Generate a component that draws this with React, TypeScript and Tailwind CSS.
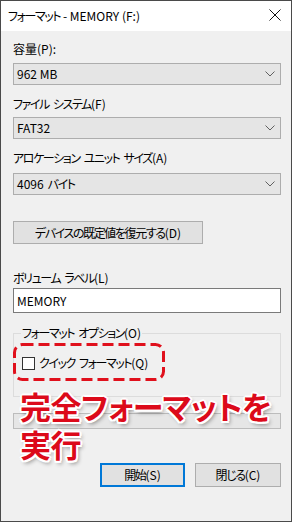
import React from "react";

const font = "font-['Yu_Gothic_UI','Noto_Sans_CJK_JP',sans-serif] [font-feature-settings:'palt']";

function Chevron() {
  return (
    <svg width="10" height="6" viewBox="0 0 10 6" className="block">
      <path d="M0.5 0.5 L5 5 L9.5 0.5" fill="none" stroke="#606060" strokeWidth="1" />
    </svg>
  );
}

function K({ children }: { children: React.ReactNode }) {
  return <span className="tracking-[-1.4px]">{children}</span>;
}

function Sp() {
  return <span className="inline-block w-[4px]" />;
}

function Select({ value }: { value: React.ReactNode }) {
  return (
    <div className="flex h-[22px] w-[268px] items-center justify-between border border-[#adadad] bg-[#e5e5e5] pl-[3px] pr-[5px]">
      <span className="whitespace-nowrap text-[12px] leading-[16px] text-black">{value}</span>
      <Chevron />
    </div>
  );
}

function Label({ children, className = "" }: { children: React.ReactNode; className?: string }) {
  return <div className={`h-[16px] whitespace-nowrap text-[12px] leading-[16px] text-black ${className}`}>{children}</div>;
}

export default function App() {
  return (
    <div className={`h-[523px] w-[294px] bg-white ${font}`}>
      <div className="relative flex h-[522px] w-[292px] flex-col border border-[#4a4a4a] bg-[#f0f0f0]">
        {/* title bar */}
        <div className="flex h-[30px] items-center justify-between bg-white pl-[7px] pr-[8px]">
          <span className="text-[12px] leading-[16px] text-black">
            <K>フォーマット</K> - MEMORY (F:)
          </span>
          <svg width="12" height="12" viewBox="0 0 12 12" className="mr-[2px] mt-[-2px]">
            <path d="M0.5 0.5 L11.5 11.5 M11.5 0.5 L0.5 11.5" stroke="#111" strokeWidth="1" />
          </svg>
        </div>

        <div className="flex flex-col pl-[12px]">
          <Label className="mt-[10px]">容量(P):</Label>
          <div className="mt-[6px]">
            <Select value="962 MB" />
          </div>
          <Label className="mt-[11px]">
            <K>ファイル</K>
            <Sp />
            <K>システム</K>(F)
          </Label>
          <div className="mt-[5px]">
            <Select value="FAT32" />
          </div>
          <Label className="mt-[11px]">
            <K>アロケーション</K>
            <Sp />
            <K>ユニット</K>
            <Sp />
            <K>サイズ</K>(A)
          </Label>
          <div className="mt-[7px]">
            <Select
              value={
                <>
                  4096
                  <Sp />
                  <K>バイト</K>
                </>
              }
            />
          </div>

          <div className="mt-[26px] flex h-[23px] w-[190px] items-center justify-center border border-[#adadad] bg-[#e1e1e1] text-[12px] text-black">
            <K>デバイスの既定値を復元する</K>(D)
          </div>

          <Label className="mt-[26px]">
            <K>ボリューム</K>
            <Sp />
            <K>ラベル</K>(L)
          </Label>
          <div className="mt-[2px] flex h-[25px] w-[268px] items-center border border-[#7a7a7a] bg-white pl-[3px] text-[12px] text-black">
            MEMORY
          </div>

          <fieldset className="mt-[12px] h-[72px] w-[268px] border border-[#dcdcdc]">
            <legend className="ml-[7px] whitespace-nowrap px-[1px] text-[12px] leading-[16px] text-black">
              <K>フォーマット</K>
              <Sp />
              <K>オプション</K>(O)
            </legend>
            <div className="ml-[8px] mt-[14px] flex items-center">
              <div className="h-[13px] w-[13px] border border-[#333] bg-white" />
              <span className="ml-[4px] whitespace-nowrap text-[12px] leading-[16px] text-black">
                <K>クイック</K>
                <Sp />
                <K>フォーマット</K>(Q)
              </span>
            </div>
          </fieldset>

          <div className="mt-[16px] h-[16px] w-[268px] border border-[#bcbcbc] bg-[#e6e6e6]" />

          <div className="mt-[34px] flex w-[268px] justify-end gap-[10px]">
            <div className="flex h-[24px] w-[85px] items-center justify-center border-2 border-[#0078d7] bg-[#e1e1e1] text-[12px] text-black">
              <K>開始</K>(S)
            </div>
            <div className="flex h-[24px] w-[86px] items-center justify-center border border-[#adadad] bg-[#e1e1e1] text-[12px] text-black">
              <K>閉じる</K>(C)
            </div>
          </div>
        </div>

        {/* annotation: dashed highlight */}
        <svg className="absolute left-[11px] top-[341px]" width="154" height="40" viewBox="0 0 154 40">
          <rect x="2.5" y="2.5" width="149" height="35" rx="8" fill="none" stroke="#e0101c" strokeWidth="3" strokeDasharray="11 5" />
        </svg>

        {/* annotation: big red text */}
        <div className="absolute left-[19px] top-[386px] whitespace-nowrap font-['Noto_Sans_CJK_JP',sans-serif] text-[31px] font-bold leading-[38px] tracking-[-0.5px] text-[#dc0a1a] [font-feature-settings:'palt'] [text-shadow:-1.5px_-1.5px_0_#fff,1.5px_-1.5px_0_#fff,-1.5px_1.5px_0_#fff,1.5px_1.5px_0_#fff,0_-2px_0_#fff,0_2px_0_#fff,-2px_0_0_#fff,2px_0_0_#fff,2px_3px_4px_rgba(0,0,0,0.45)]">
          <div>完全フォーマットを</div>
          <div>実行</div>
        </div>
      </div>
    </div>
  );
}
